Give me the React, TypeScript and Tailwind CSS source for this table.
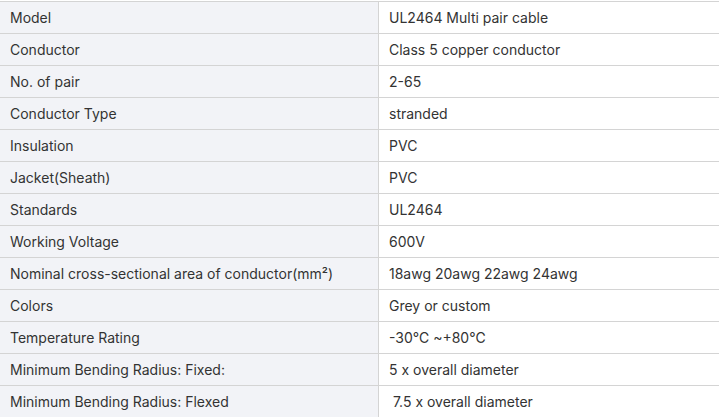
const rows: [string, React.ReactNode][] = [
  ["Model", "UL2464 Multi pair cable"],
  ["Conductor", "Class 5 copper conductor"],
  ["No. of pair", "2-65"],
  ["Conductor Type", "stranded"],
  ["Insulation", "PVC"],
  ["Jacket(Sheath)", "PVC"],
  ["Standards", "UL2464"],
  ["Working Voltage", "600V"],
  ["Nominal cross-sectional area of conductor(mm²)", "18awg 20awg 22awg 24awg"],
  ["Colors", "Grey or custom"],
  ["Temperature Rating", "-30℃ ~+80℃"],
  ["Minimum Bending Radius: Fixed:", "5 x overall diameter"],
  ["Minimum Bending Radius: Flexed", "\u00a07.5 x overall diameter"],
]

export default function App() {
  return (
    <div className="w-[719px] h-[417px] overflow-hidden bg-white pt-px font-['Inter','Liberation_Sans',sans-serif] text-[14px] text-[#333]">
      {rows.map(([label, value], i) => (
        <div key={i} className="grid grid-cols-[379px_1fr] h-[32px] border-t border-[#d4d4d4]">
          <div className="bg-[#f2f3f7] border-r border-[#d4d4d4] pl-[10px] flex items-center">{label}</div>
          <div className="pl-[10px] flex items-center whitespace-pre">{value}</div>
        </div>
      ))}
    </div>
  )
}
